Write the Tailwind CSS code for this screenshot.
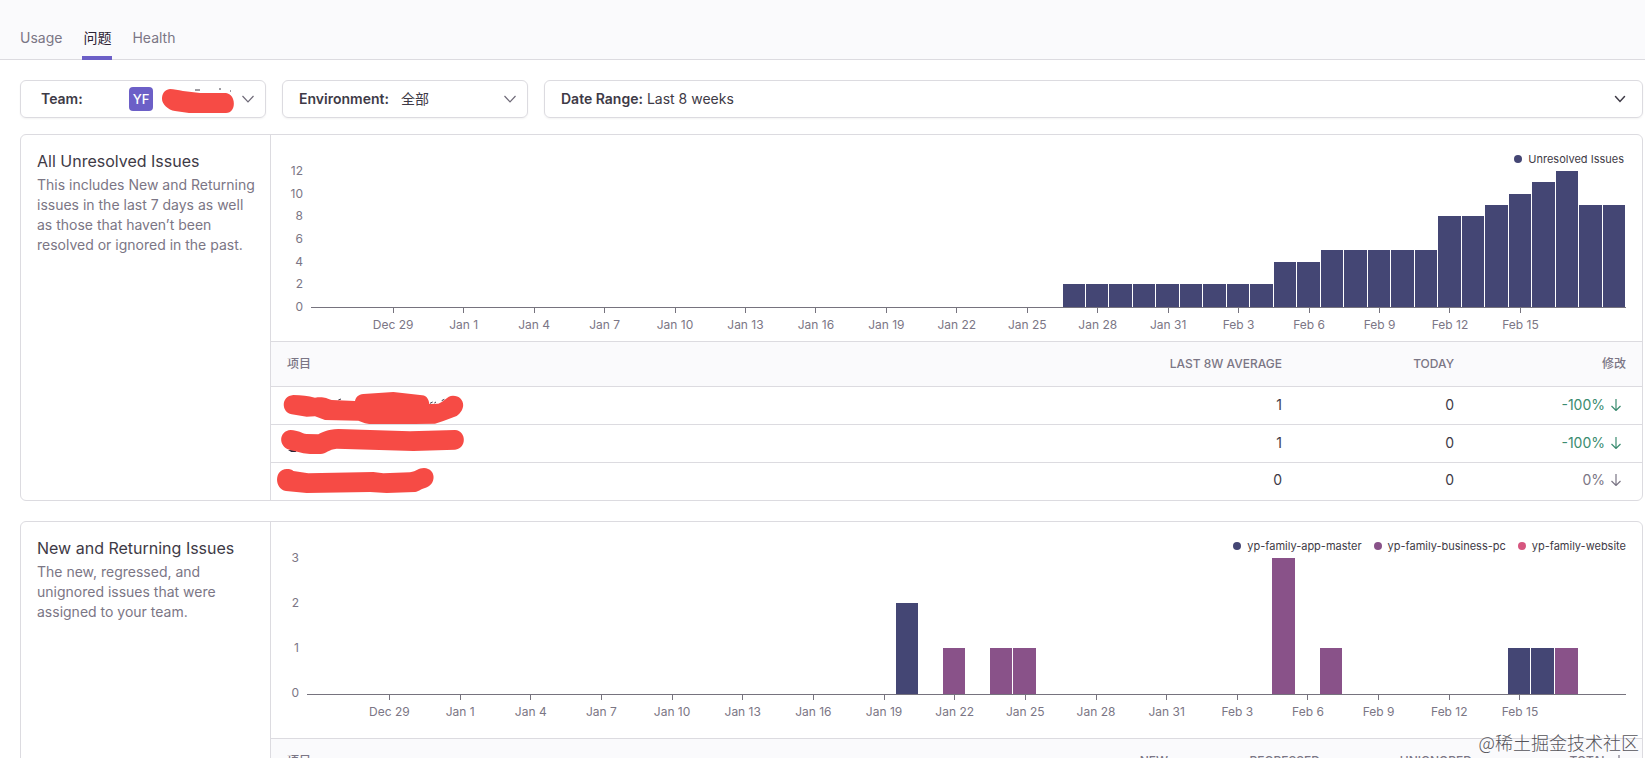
<!DOCTYPE html>
<html lang="zh-CN">
<head>
<meta charset="utf-8">
<meta name="viewport" content="width=device-width, initial-scale=1">
<title>Team Stats</title>
<script src="https://cdn.jsdelivr.net/npm/@tailwindcss/browser@4"></script>
</head>
<body class="relative h-screen overflow-hidden bg-white font-['Inter','Noto_Sans_CJK_SC',sans-serif] text-sm text-[#3e3a46]">

<header class="border-b border-[#dcdbe0] bg-[#fafafc]">
  <nav class="flex gap-5 pl-5 pt-6 text-[#7b7685]">
    <a href="#" class="h-[35px] pt-1">Usage</a>
    <a href="#" aria-current="page" class="-mb-px h-9 border-b-4 border-[#6c5fc7] px-px pt-1 text-[#2b2233]">问题</a>
    <a href="#" class="h-[35px] pt-1">Health</a>
  </nav>
</header>

<main class="pb-5 pl-5 pr-0.5 pt-5">
  <div class="mb-4 flex gap-4">
    <button type="button" aria-haspopup="listbox" class="flex h-[38px] w-[246px] items-center rounded-md border border-[#dcdbe0] pl-5 pr-[11px] shadow-xs">
      <span class="w-[88px] text-left font-semibold">Team:</span>
      <span class="grid size-6 place-items-center rounded-sm bg-[#6c5fc7] text-[13px] font-medium text-white">YF</span>
      <svg class="ml-2 h-7 w-20" viewBox="0 0 80 28" aria-hidden="true">
        <path d="M34 5h5M58 4h2M69 6h1" stroke="#3e3a46"/>
        <path d="M9 4C3 5 1 9 1 14c0 5 6 11 13 12l14 2h37c11 0 10-19 0-20L39 8 22 6C17 5 13 4 9 4z" fill="#f64b45"/>
      </svg>
      <svg class="ml-auto h-2 w-3" viewBox="0 0 12 8" fill="none" stroke="#6f6a78" stroke-width="1.200" aria-hidden="true"><path d="M.5 1 6 6.800 11.500 1"/></svg>
    </button>
    <div class="flex h-[38px] w-[246px] items-center rounded-md border border-[#dcdbe0] pl-4 pr-[11px] shadow-xs">
      <label for="env" class="mr-3 font-semibold">Environment:</label>
      <select id="env" class="min-w-0 flex-1 appearance-none bg-transparent"><option>全部</option></select>
      <svg class="h-2 w-3" viewBox="0 0 12 8" fill="none" stroke="#6f6a78" stroke-width="1.200" aria-hidden="true"><path d="M.5 1 6 6.800 11.500 1"/></svg>
    </div>
    <div class="flex h-[38px] flex-1 items-center rounded-md border border-[#dcdbe0] pl-4 pr-4 shadow-xs">
      <label for="range" class="mr-1 font-semibold">Date Range:</label>
      <select id="range" class="min-w-0 flex-1 appearance-none bg-transparent"><option>Last 8 weeks</option></select>
      <svg class="h-2 w-3" viewBox="0 0 12 8" fill="none" stroke="#3e3a46" stroke-width="1.500" stroke-linecap="round" aria-hidden="true"><path d="M1.500 1.500 6 6.500 10.500 1.500"/></svg>
    </div>
  </div>

  <section class="mb-5 flex rounded-md border border-[#dcdbe0]">
    <div class="w-[250px] shrink-0 border-r border-[#dcdbe0] py-4 pl-4 pr-3">
      <h2 class="mb-1 text-base leading-5">All Unresolved Issues</h2>
      <p class="leading-5 text-[#7b7685]">This includes New and Returning issues in the last 7 days as well as those that haven’t been resolved or ignored in the past.</p>
    </div>
    <div class="min-w-0 flex-1">
      <div class="relative flex h-[206px] pr-4 pt-7 text-xs text-[#7b7685]">
        <ul class="absolute right-[18px] top-4 flex gap-4 text-[11px] leading-4 text-[#3e3a46]">
          <li class="flex items-center gap-1.5"><i class="size-2 rounded-full bg-[#444674]"></i>Unresolved Issues</li>
        </ul>
        <div class="mr-2 flex h-[152px] w-8 flex-col justify-between text-right leading-4">
          <span>12</span><span>10</span><span>8</span><span>6</span><span>4</span><span>2</span><span>0</span>
        </div>
        <div class="flex-1 pt-2">
          <div class="flex h-[137px] items-end border-b border-[#76737e]" data-max="12" data-bars="32:2 33:2 34:2 35:2 36:2 37:2 38:2 39:2 40:2 41:4 42:4 43:5 44:5 45:5 46:5 47:5 48:8 49:8 50:9 51:10 52:11 53:12 54:9 55:9"></div>
          <div class="flex" data-axis></div>
        </div>
      </div>
      <table class="w-full table-fixed border-t border-[#dcdbe0] text-right">
        <colgroup><col><col class="w-[172px]"><col class="w-[172px]"><col class="w-[188px]"></colgroup>
        <thead class="bg-[#fafafc] text-xs text-[#7b7685]">
          <tr class="h-[45px] border-b border-[#dcdbe0]">
            <th class="pl-4 text-left font-medium">项目</th><th class="whitespace-nowrap font-medium">LAST 8W AVERAGE</th><th class="font-medium">TODAY</th><th class="pr-4 font-medium">修改</th>
          </tr>
        </thead>
        <tbody>
          <tr class="h-[38px] border-b border-[#dcdbe0]">
            <td><svg class="block h-[37px] w-[200px]" viewBox="3 141 600 111" fill="#f64b45" aria-hidden="true"><path d="M205 180l8-3M480 190l8-4M493 189l5-3M515 182l8-4" stroke="#3e3a46" stroke-width="3"/><path d="M70 165C33 168 32 216 65 223L110 230 135 229 165 240 265 242 285 250 310 254 495 251 520 243 560 228C592 205 582 167 549 167 530 168 522 185 505 191L478 192C476 175 468 165 450 165L370 156 280 162C265 164 257 172 255 183L185 180C168 175 163 170 135 173 115 168 95 166 70 165z"/></svg></td>
            <td class="pb-0.5">1</td><td class="pb-0.5">0</td>
            <td class="pb-0.5 pr-[21px] text-[#3b8c70]"><span class="flex items-center justify-end gap-1.5">-100%<svg class="h-3 w-2.5" viewBox="0 0 10 12" fill="none" stroke="currentColor" stroke-width="1.200" aria-hidden="true"><path d="M5 0v11.500M.5 7 5 11.500 9.500 7"/></svg></span></td>
          </tr>
          <tr class="h-[38px] border-b border-[#dcdbe0]">
            <td><svg class="block h-[37px] w-[200px]" viewBox="3 255 600 111" fill="#f64b45" aria-hidden="true"><path d="M54 330l10 6h14l2-5z" fill="#2b2233"/><path d="M62 270C26 272 24 319 58 329L100 340 120 342H152C168 341 176 328 200 326L430 333 555 329C591 326 590 272 555 270L420 274 205 267C170 269 160 275 145 283L110 282C95 280 85 271 62 270z"/></svg></td>
            <td class="pb-0.5">1</td><td class="pb-0.5">0</td>
            <td class="pb-0.5 pr-[21px] text-[#3b8c70]"><span class="flex items-center justify-end gap-1.5">-100%<svg class="h-3 w-2.5" viewBox="0 0 10 12" fill="none" stroke="currentColor" stroke-width="1.200" aria-hidden="true"><path d="M5 0v11.500M.5 7 5 11.500 9.500 7"/></svg></span></td>
          </tr>
          <tr class="h-[37px]">
            <td><svg class="block h-9 w-[200px]" viewBox="3 369 600 108" fill="#f64b45" aria-hidden="true"><path d="M50 387C12 388 12 447 48 453L110 459 300 456 350 459 435 456C447 455 452 447 465 444 500 435 500 386 462 384 445 384 440 394 420 397L340 400 310 396 115 400 70 393C66 389 60 387 50 387z"/></svg></td>
            <td class="pb-0.5">0</td><td class="pb-0.5">0</td>
            <td class="pb-0.5 pr-[21px] text-[#7b7685]"><span class="flex items-center justify-end gap-1.5">0%<svg class="h-3 w-2.5" viewBox="0 0 10 12" fill="none" stroke="currentColor" stroke-width="1.200" aria-hidden="true"><path d="M5 0v11.500M.5 7 5 11.500 9.500 7"/></svg></span></td>
          </tr>
        </tbody>
      </table>
    </div>
  </section>

  <section class="flex rounded-md border border-[#dcdbe0]">
    <div class="w-[250px] shrink-0 border-r border-[#dcdbe0] py-4 pl-4 pr-3">
      <h2 class="mb-1 text-base leading-5">New and Returning Issues</h2>
      <p class="leading-5 text-[#7b7685]">The new, regressed, and unignored issues that were assigned to your team.</p>
    </div>
    <div class="min-w-0 flex-1">
      <div class="relative flex h-[216px] pr-4 pt-7 text-xs text-[#7b7685]">
        <ul class="absolute right-4 top-4 flex gap-3 text-[11px] leading-4 text-[#3e3a46]">
          <li class="flex items-center gap-1.5"><i class="size-2 rounded-full bg-[#444674]"></i>yp-family-app-master</li>
          <li class="flex items-center gap-1.5"><i class="size-2 rounded-full bg-[#895289]"></i>yp-family-business-pc</li>
          <li class="flex items-center gap-1.5"><i class="size-2 rounded-full bg-[#d6567f]"></i>yp-family-website</li>
        </ul>
        <div class="mr-2 flex h-[152px] w-7 flex-col justify-between text-right leading-4">
          <span>3</span><span>2</span><span>1</span><span>0</span>
        </div>
        <div class="flex-1 pt-2">
          <div class="flex h-[137px] items-end border-b border-[#76737e]" data-max="3" data-bars="25:2 27:1:b 29:1:b 30:1:b 41:3:b 43:1:b 51:1 52:1 53:1:b"></div>
          <div class="flex" data-axis></div>
        </div>
      </div>
      <table class="w-full table-fixed border-t border-[#dcdbe0] text-right">
        <colgroup><col><col class="w-[152px]"><col class="w-[152px]"><col class="w-[170px]"></colgroup>
        <thead class="bg-[#fafafc] text-xs text-[#7b7685]">
          <tr class="h-[45px] border-b border-[#dcdbe0]">
            <th class="pl-4 text-left font-medium"><span class="flex justify-between">项目<span>NEW</span></span></th><th class="font-medium">REGRESSED</th><th class="font-medium">UNIGNORED</th>
            <th class="pr-[18px] font-medium"><span class="flex items-center justify-end gap-1.5">TOTAL<svg class="h-3 w-2.5" viewBox="0 0 10 12" fill="none" stroke="currentColor" stroke-width="1.200" aria-hidden="true"><path d="M5 0v11.500M.5 7 5 11.500 9.500 7"/></svg></span></th>
          </tr>
        </thead>
      </table>
    </div>
  </section>
</main>

<p class="absolute bottom-1 right-1.5 text-lg leading-6 font-light text-[#55535a] font-['Noto_Sans_CJK_SC',sans-serif]">@稀土掘金技术社区</p>

<script>
  // One slot per day, 56 days; entries are "day:value[:series]".
  document.querySelectorAll('[data-bars]').forEach(plot => {
    const byDay = {};
    plot.dataset.bars.split(' ').forEach(s => { const [d, v, k] = s.split(':'); byDay[d] = { v, k }; });
    for (let i = 0; i < 56; i++) {
      const slot = document.createElement('div');
      slot.className = 'flex h-full flex-1 items-end pr-px';
      if (byDay[i]) {
        const bar = document.createElement('div');
        bar.className = byDay[i].k ? 'w-full bg-[#895289]' : 'w-full bg-[#444674]';
        bar.style.height = byDay[i].v / plot.dataset.max * 100 + '%';
        slot.append(bar);
      }
      plot.append(slot);
    }
  });
  // A label every third day, centred on its day.
  const days = ['Dec 29', 'Jan 1', 'Jan 4', 'Jan 7', 'Jan 10', 'Jan 13', 'Jan 16', 'Jan 19', 'Jan 22', 'Jan 25', 'Jan 28', 'Jan 31', 'Feb 3', 'Feb 6', 'Feb 9', 'Feb 12', 'Feb 15'];
  document.querySelectorAll('[data-axis]').forEach(axis => {
    axis.innerHTML = '<div class="flex-[2]"></div>' + days.map(d =>
      '<div class="flex min-w-0 flex-[3] flex-col items-center gap-1 whitespace-nowrap leading-4"><i class="h-[5px] w-px bg-[#76737e]"></i>' + d + '</div>'
    ).join('') + '<div class="flex-[3]"></div>';
  });
</script>
</body>
</html>
